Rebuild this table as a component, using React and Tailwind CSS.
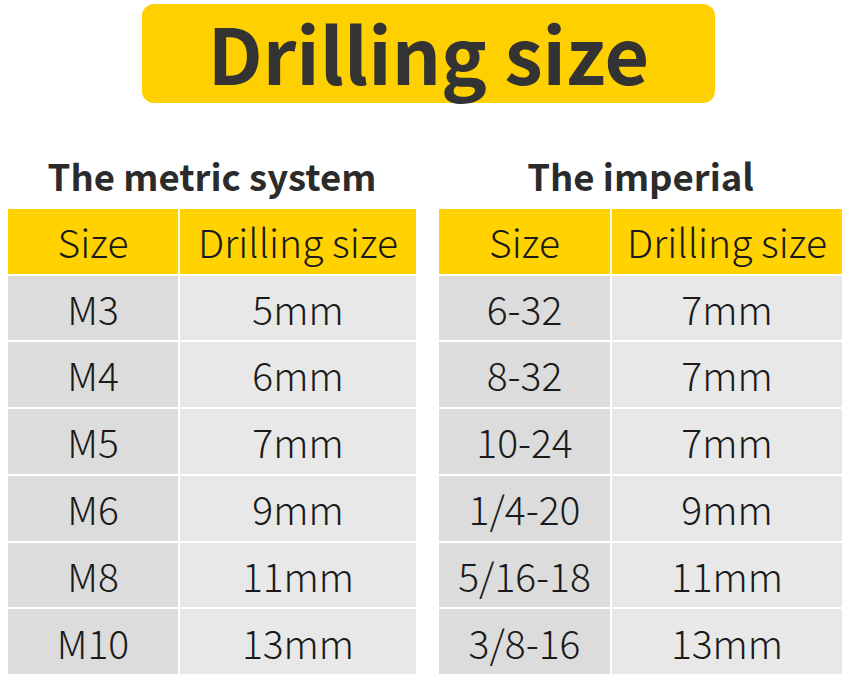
const metric = [
  ['M3', '5mm'],
  ['M4', '6mm'],
  ['M5', '7mm'],
  ['M6', '9mm'],
  ['M8', '11mm'],
  ['M10', '13mm'],
];

const imperial = [
  ['6-32', '7mm'],
  ['8-32', '7mm'],
  ['10-24', '7mm'],
  ['1/4-20', '9mm'],
  ['5/16-18', '11mm'],
  ['3/8-16', '13mm'],
];

const SizeTable = ({ title, rows, firstCol, secondCol }) => (
  <div className="flex flex-col">
    <h2 className="h-[50px] mt-[48px] mb-[8px] text-center text-[36.5px] leading-[50px] font-bold text-[#2b2b2b]">
      {title}
    </h2>
    <div className="flex flex-col gap-[2px]">
      <div className="flex gap-[2px] h-[64.5px]">
        <div className={`${firstCol} bg-[#FFD200] flex items-center justify-center text-[39px] font-light text-[#1a1a1a]`}>Size</div>
        <div className={`${secondCol} bg-[#FFD200] flex items-center justify-center text-[39px] font-light text-[#1a1a1a]`}>Drilling size</div>
      </div>
      {rows.map(([size, drill]) => (
        <div key={size} className="flex gap-[2px] h-[64.8px]">
          <div className={`${firstCol} bg-[#DCDCDC] flex items-center justify-center text-[39px] font-light text-[#1a1a1a]`}>{size}</div>
          <div className={`${secondCol} bg-[#E8E8E8] flex items-center justify-center text-[39px] font-light text-[#1a1a1a]`}>{drill}</div>
        </div>
      ))}
    </div>
  </div>
);

export default function App() {
  return (
    <div
      className="w-[853px] h-[680px] bg-white overflow-hidden"
      style={{ fontFamily: '"Noto Sans CJK SC", "Noto Sans", sans-serif' }}
    >
      <div className="flex justify-center pt-[4px] pl-[4px]">
        <div className="w-[573px] h-[99px] rounded-[12px] bg-[#FFD000] flex items-center justify-center">
          <h1 className="text-[77px] font-bold leading-[1.15] text-[#333333] pb-[2px]">Drilling size</h1>
        </div>
      </div>
      <div className="flex pl-[8px] gap-[23px]">
        <SizeTable title="The metric system" rows={metric} firstCol="w-[170px]" secondCol="w-[236px]" />
        <SizeTable title="The imperial" rows={imperial} firstCol="w-[171px]" secondCol="w-[230px]" />
      </div>
    </div>
  );
}
